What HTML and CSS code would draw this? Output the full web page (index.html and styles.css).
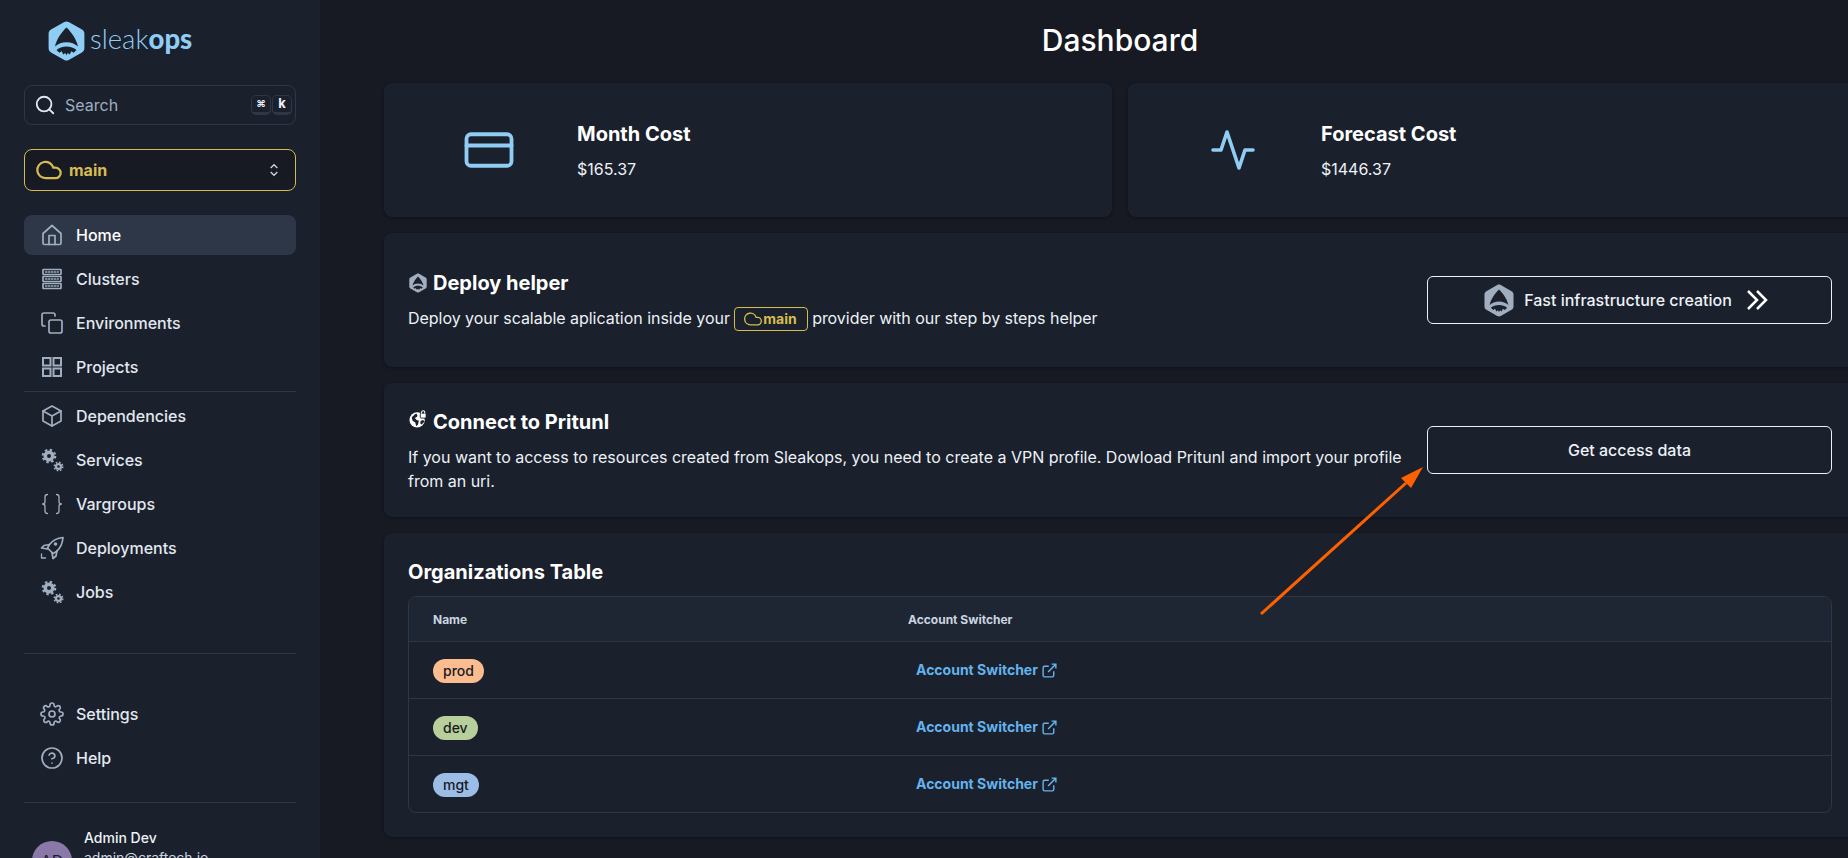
FILE: index.html
```html
<!DOCTYPE html>
<html lang="en">
<head>
    <meta charset="UTF-8">
    <title>Sleakops Dashboard</title>
    <link rel="stylesheet" href="styles.css">
</head>
<body>
    <svg class="defs" width="0" height="0">
        <symbol id="logo" viewBox="0 0 37 40">
            <path fill="currentColor" d="M16.3 1 3 8.6C1.5 9.4.6 11 .6 12.700v14.600c0 1.700.9 3.300 2.400 4.100L16.300 39c1.400.8 3 .8 4.400 0L34 31.400c1.500-.8 2.400-2.400 2.400-4.100V12.700c0-1.700-.9-3.300-2.400-4.100L20.700 1c-1.400-.8-3-.8-4.400 0Z"/>
            <path fill="#1a202c" d="M18.500 6.500C13.500 11 8.500 18.500 7 25.500c3-2.800 7-4.300 11.500-4.300s8.500 1.500 11.500 4.300C28.500 18.500 23.500 11 18.500 6.500Z"/>
            <path fill="#1a202c" d="M8.500 29c2.600-2.200 6-3.400 10-3.400s7.400 1.200 10 3.400l-2.800 2.700-2.400-1.500-1.500 3.300-2-1.600-1.300 2.300-1.300-2.300-2 1.600-1.500-3.300-2.400 1.500Z"/>
        </symbol>
    </svg>

    <div class="app">
        <aside class="sidebar">
            <div class="brand">
                <svg class="brand-icon"><use href="#logo"/></svg>
                <span class="brand-name">sleak<b>ops</b></span>
            </div>

            <div class="search">
                <svg class="search-icon" viewBox="0 0 24 24"><circle cx="11" cy="11" r="8"/><path d="m21 21-4.300-4.300"/></svg>
                <span class="search-text">Search</span>
                <kbd class="key cmd">⌘</kbd>
                <kbd class="key">k</kbd>
            </div>

            <div class="provider">
                <svg class="cloud-icon" viewBox="0 0 24 24"><path d="M17.500 19H9a7 7 0 1 1 6.700-9h1.800a4.500 4.500 0 1 1 0 9Z"/></svg>
                <span class="provider-name">main</span>
                <svg class="updown-icon" viewBox="0 0 24 24"><path d="m7 9 5-5 5 5M7 15l5 5 5-5"/></svg>
            </div>

            <nav class="nav">
                <a class="nav-item active">
                    <svg class="nav-icon" viewBox="0 0 24 24"><path d="M3 10.500 12 2.500l9 8V20a1.500 1.500 0 0 1-1.500 1.500h-15A1.500 1.500 0 0 1 3 20Z"/><path d="M9 21.500V12.500h6v9"/></svg>
                    Home
                </a>
                <a class="nav-item">
                    <svg class="nav-icon" viewBox="0 0 24 24"><rect x="3" y="2.500" width="18" height="5" rx=".5"/><rect x="3" y="9.500" width="18" height="5" rx=".5"/><rect x="3" y="16.500" width="18" height="5" rx=".5"/><path class="thin" d="M5.500 5h13M5.500 12h13M5.500 19h13" stroke-dasharray="1.500 1.500"/></svg>
                    Clusters
                </a>
                <a class="nav-item">
                    <svg class="nav-icon" viewBox="0 0 24 24"><rect x="9" y="9" width="13" height="13" rx="2"/><path d="M5 15H4a2 2 0 0 1-2-2V4a2 2 0 0 1 2-2h9a2 2 0 0 1 2 2v1"/></svg>
                    Environments
                </a>
                <a class="nav-item">
                    <svg class="nav-icon square" viewBox="0 0 24 24"><rect x="3" y="3" width="7.500" height="7.500"/><rect x="13.500" y="3" width="7.500" height="7.500"/><rect x="3" y="13.500" width="7.500" height="7.500"/><rect x="13.500" y="13.500" width="7.500" height="7.500"/></svg>
                    Projects
                </a>
                <div class="divider"></div>
                <a class="nav-item">
                    <svg class="nav-icon" viewBox="0 0 24 24"><path d="M12 2 3 7v10l9 5 9-5V7Z"/><path d="m3 7 9 5 9-5M12 12v10"/></svg>
                    Dependencies
                </a>
                <a class="nav-item">
                    <svg class="nav-icon gears" viewBox="0 0 24 24"><circle class="gear-tooth" cx="9" cy="8" r="6.200"/><circle class="gear-body" cx="9" cy="8" r="5.500"/><circle class="gear-hole" cx="9" cy="8" r="2"/><circle class="gear-tooth small" cx="18.500" cy="18.500" r="4.200"/><circle class="gear-body" cx="18.500" cy="18.500" r="3.600"/><circle class="gear-hole" cx="18.500" cy="18.500" r="1.300"/></svg>
                    Services
                </a>
                <a class="nav-item">
                    <svg class="nav-icon" viewBox="0 0 24 24"><path class="thin" d="M7.500 2.500C5.500 2.500 5 3.500 5 5v4.500C5 11 4 12 2.500 12 4 12 5 13 5 14.500V19c0 1.500.5 2.500 2.500 2.500M16.500 2.500c2 0 2.500 1 2.500 2.500v4.500c0 1.500 1 2.500 2.500 2.500-1.500 0-2.500 1-2.500 2.500V19c0 1.500-.5 2.500-2.500 2.500"/></svg>
                    Vargroups
                </a>
                <a class="nav-item">
                    <svg class="nav-icon" viewBox="0 0 24 24"><path d="M23 1.500c-5.500.5-10 2.500-13.500 7l-2 3.500 5.500 5.500 3.500-2c3.500-3 6-8.500 6.500-14Z"/><path d="M9.500 8.500 4 9.500 1.500 12l6 1M17 14.500l-1 5.500-3 2.500-1-6"/><circle class="dot" cx="15.500" cy="8" r="1.800"/><path class="thin" d="M1.500 18v4h4"/></svg>
                    Deployments
                </a>
                <a class="nav-item">
                    <svg class="nav-icon gears" viewBox="0 0 24 24"><circle class="gear-tooth" cx="9" cy="8" r="6.200"/><circle class="gear-body" cx="9" cy="8" r="5.500"/><circle class="gear-hole" cx="9" cy="8" r="2"/><circle class="gear-tooth small" cx="18.500" cy="18.500" r="4.200"/><circle class="gear-body" cx="18.500" cy="18.500" r="3.600"/><circle class="gear-hole" cx="18.500" cy="18.500" r="1.300"/></svg>
                    Jobs
                </a>
                <div class="divider spaced"></div>
                <a class="nav-item">
                    <svg class="nav-icon" viewBox="0 0 24 24"><circle cx="12" cy="12" r="3"/><path d="M19.400 15a1.650 1.650 0 0 0 .33 1.820l.06.06a2 2 0 1 1-2.830 2.830l-.06-.06a1.650 1.650 0 0 0-2.820 1.170V21a2 2 0 1 1-4 0v-.09A1.650 1.650 0 0 0 7.260 19.740l-.06.06a2 2 0 1 1-2.830-2.830l.06-.06A1.650 1.650 0 0 0 3.260 14H3a2 2 0 1 1 0-4h.09a1.650 1.650 0 0 0 1.170-2.820l-.06-.06a2 2 0 1 1 2.830-2.830l.06.06A1.650 1.650 0 0 0 10 3.260V3a2 2 0 1 1 4 0v.09a1.650 1.650 0 0 0 2.820 1.170l.06-.06a2 2 0 1 1 2.830 2.830l-.06.06A1.650 1.650 0 0 0 20.910 10H21a2 2 0 1 1 0 4h-.09a1.650 1.650 0 0 0-1.510 1Z"/></svg>
                    Settings
                </a>
                <a class="nav-item">
                    <svg class="nav-icon" viewBox="0 0 24 24"><circle cx="12" cy="12" r="10"/><path d="M9.100 9a3 3 0 0 1 5.800 1c0 2-3 2.800-3 2.800M12 17h.01"/></svg>
                    Help
                </a>
                <div class="divider last"></div>
            </nav>

            <div class="user">
                <div class="avatar">AD</div>
                <div class="user-info">
                    <div class="user-name">Admin Dev</div>
                    <div class="user-mail">admin@craftech.io</div>
                </div>
            </div>
        </aside>

        <main class="main">
            <h1 class="page-title">Dashboard</h1>

            <div class="stats">
                <section class="card stat">
                    <svg class="stat-icon wide" viewBox="0 0 24 24"><rect x="2" y="5" width="20" height="14" rx="2"/><path d="M2 10h20"/></svg>
                    <div>
                        <h2 class="stat-title">Month Cost</h2>
                        <p class="stat-value">$165.37</p>
                    </div>
                </section>
                <section class="card stat">
                    <svg class="stat-icon" viewBox="0 0 24 24"><path d="M22 12h-4l-3 9L9 3l-3 9H2"/></svg>
                    <div>
                        <h2 class="stat-title">Forecast Cost</h2>
                        <p class="stat-value">$1446.37</p>
                    </div>
                </section>
            </div>

            <section class="card helper">
                <div class="helper-text deploy">
                    <h2 class="card-title"><svg class="title-icon"><use href="#logo"/></svg>Deploy helper</h2>
                    <p>Deploy your scalable aplication inside your <span class="chip"><svg class="chip-icon" viewBox="0 0 24 24"><path d="M17.500 19H9a7 7 0 1 1 6.700-9h1.800a4.500 4.500 0 1 1 0 9Z"/></svg>main</span> provider with our step by steps helper</p>
                </div>
                <button class="outline-btn with-icons">
                    <svg class="btn-logo"><use href="#logo"/></svg>
                    Fast infrastructure creation
                    <svg class="btn-arrows" viewBox="0 0 24 24"><path d="m4 3 9 9-9 9M13 3l9 9-9 9"/></svg>
                </button>
            </section>

            <section class="card helper">
                <div class="helper-text">
                    <h2 class="card-title">
                        <svg class="title-icon globe" viewBox="0 0 20 20"><circle cx="9" cy="11" r="8.500"/><path class="land" d="M3 8c2-1 3-3 5-4 1 1 2 2 1 3.500L6.500 9l2 2 2.500 1-1 4-2 2-1-4-3-2ZM13 12l3-1 1 2-3 3-1.500-1Z"/><rect class="lock" x="12.500" y="3.500" width="6.500" height="5.500" rx="1"/><path class="shackle" d="M14 4V2.500a1.700 1.700 0 0 1 3.500 0V4"/></svg>Connect to Pritunl</h2>
                    <p>If you want to access to resources created from Sleakops, you need to create a VPN profile. Dowload Pritunl and import your profile from an uri.</p>
                </div>
                <button class="outline-btn">Get access data</button>
            </section>

            <section class="card orgs">
                <h2 class="card-title">Organizations Table</h2>
                <div class="table-wrap">
                    <table class="org-table">
                        <thead>
                            <tr>
                                <th class="name-col">Name</th>
                                <th>Account Switcher</th>
                            </tr>
                        </thead>
                        <tbody>
                            <tr>
                                <td><span class="badge prod">prod</span></td>
                                <td><a class="switch-link">Account Switcher<svg class="ext-icon" viewBox="0 0 24 24"><path d="M18 13v6a2 2 0 0 1-2 2H5a2 2 0 0 1-2-2V8a2 2 0 0 1 2-2h6M15 3h6v6M10 14 21 3"/></svg></a></td>
                            </tr>
                            <tr>
                                <td><span class="badge dev">dev</span></td>
                                <td><a class="switch-link">Account Switcher<svg class="ext-icon" viewBox="0 0 24 24"><path d="M18 13v6a2 2 0 0 1-2 2H5a2 2 0 0 1-2-2V8a2 2 0 0 1 2-2h6M15 3h6v6M10 14 21 3"/></svg></a></td>
                            </tr>
                            <tr>
                                <td><span class="badge mgt">mgt</span></td>
                                <td><a class="switch-link">Account Switcher<svg class="ext-icon" viewBox="0 0 24 24"><path d="M18 13v6a2 2 0 0 1-2 2H5a2 2 0 0 1-2-2V8a2 2 0 0 1 2-2h6M15 3h6v6M10 14 21 3"/></svg></a></td>
                            </tr>
                        </tbody>
                    </table>
                </div>
            </section>
        </main>
    </div>

    <!-- annotation drawn over the page -->
    <svg class="annotation" viewBox="0 0 1848 858">
        <path d="M1261 614 1406 483" stroke="#ff6000" stroke-width="3" fill="none"/>
        <path d="M1423 467 1411 488 1401 478Z" fill="#ff6000"/>
    </svg>
</body>
</html>
```

FILE: styles.css
```css
html, body {
    margin: 0;
    height: 100%;
    overflow: hidden;
}
body {
    font-family: "Inter", "Liberation Sans", sans-serif;
    font-size: 16px;
    line-height: 24px;
    background-color: #171923;
    color: #edf2f7;
    position: relative;
}
.defs { position: absolute; }
.app {
    display: flex;
    width: 1920px;
    height: 100%;
}

/* sidebar */
.sidebar {
    width: 320px;
    flex: none;
    box-sizing: border-box;
    padding: 21px 24px 0;
    background-color: #1a202c;
    overflow: hidden;
}
.brand {
    display: flex;
    align-items: center;
    height: 40px;
    margin-bottom: 24px;
    padding-left: 24px;
    color: #90cdf4;
}
.brand-icon {
    width: 37px;
    height: 40px;
    margin-right: 5px;
}
.brand-name {
    margin-top: -4px;
    font-family: "Lato", "Inter", sans-serif;
    font-size: 27.500px;
    font-weight: 300;
}
.brand-name b { font-weight: 900; }

.search {
    display: flex;
    align-items: center;
    height: 40px;
    box-sizing: border-box;
    padding: 0 3px 0 9px;
    margin-bottom: 24px;
    border: 1px solid #2d3748;
    border-radius: 8px;
}
.search-icon {
    width: 22px;
    height: 22px;
    fill: none;
    stroke: #e2e8f0;
    stroke-width: 2;
    stroke-linecap: round;
}
.search-text {
    flex: 1;
    margin-left: 9px;
    color: #a0aec0;
}
.key {
    width: 20px;
    height: 20px;
    box-sizing: border-box;
    margin-left: 1px;
    margin-top: -1px;
    border: 1px solid #2d3748;
    border-bottom-width: 3px;
    border-radius: 5px;
    background-color: #1a202c;
    color: #edf2f7;
    font-family: "Inter", "DejaVu Sans", sans-serif;
    font-size: 13px;
    font-weight: 700;
    line-height: 15px;
    text-align: center;
}
.key.cmd { font-size: 10px; }

.provider {
    display: flex;
    align-items: center;
    height: 42px;
    box-sizing: border-box;
    padding: 0 12px 0 10px;
    margin-bottom: 24px;
    border: 1px solid #d6bc4f;
    border-radius: 8px;
    background-color: #171923;
    color: #d6bc4f;
}
.cloud-icon {
    width: 28px;
    height: 28px;
    fill: none;
    stroke: currentColor;
    stroke-width: 1.900;
}
.provider-name {
    flex: 1;
    margin-left: 6px;
    font-weight: 700;
}
.updown-icon {
    width: 16px;
    height: 16px;
    margin-right: 1px;
    fill: none;
    stroke: #cbd5e0;
    stroke-width: 2;
}

.nav-item {
    display: flex;
    align-items: center;
    height: 40px;
    margin-bottom: 4px;
    padding-left: 16px;
    border-radius: 8px;
    color: #e2e8f0;
    font-weight: 450;
}
.nav-item.active {
    background-color: #2d3748;
    color: #fff;
}
.nav-icon {
    width: 24px;
    height: 24px;
    margin-right: 12px;
    flex: none;
    fill: none;
    stroke: #a0aec0;
    stroke-width: 1.700;
    stroke-linejoin: round;
    stroke-linecap: round;
}
.nav-icon.square { stroke-linejoin: miter; stroke-width: 2; }
.nav-icon .thin { stroke-width: 1.300; }
.nav-icon .dot { fill: #a0aec0; stroke: none; }
.gears .gear-body { fill: #a0aec0; stroke: none; }
.gears .gear-hole { fill: #1a202c; stroke: none; }
.gears .gear-tooth {
    stroke: #a0aec0;
    stroke-width: 2.200;
    stroke-linecap: butt;
    stroke-dasharray: 2.400 2.470;
}
.gears .gear-tooth.small {
    stroke-width: 1.600;
    stroke-dasharray: 1.650 1.650;
}
.divider {
    height: 1px;
    margin-bottom: 4px;
    background-color: #2d3748;
}
.divider.spaced { margin: 41px 0 40px; }
.divider.last { margin: 24px 0 0; }

.user {
    position: relative;
    height: 60px;
    padding-left: 60px;
    margin-top: 25px;
    font-size: 14px;
    line-height: 20px;
}
.avatar {
    position: absolute;
    left: 8px;
    top: 13px;
    width: 40px;
    height: 40px;
    border-radius: 50%;
    background-color: #8a78a8;
    color: #1a202c;
    font-size: 16px;
    line-height: 40px;
    text-align: center;
}
.user-name { color: #edf2f7; font-weight: 450; }
.user-mail { color: #cbd5e0; }

/* main */
.main {
    width: 1600px;
    box-sizing: border-box;
    padding: 16px 64px 0;
}
.page-title {
    margin: 0 0 19px;
    font-size: 30px;
    font-weight: 500;
    line-height: 48px;
    text-align: center;
    color: #fff;
}
.stats {
    display: grid;
    grid-template-columns: 1fr 1fr;
    gap: 16px;
    margin-bottom: 16px;
}
.card {
    box-sizing: border-box;
    padding: 24px;
    margin-bottom: 16px;
    background-color: #1a202c;
    border-radius: 8px;
    box-shadow: 0 1px 3px rgba(0,0,0,0.3);
}
.stat {
    display: flex;
    align-items: center;
    height: 134px;
    margin-bottom: 0;
    padding-left: 81px;
}
.stat-icon {
    width: 48px;
    height: 48px;
    margin-right: 64px;
    fill: none;
    stroke: #90cdf4;
    stroke-width: 1.800;
    stroke-linecap: round;
    stroke-linejoin: round;
}
.stat-icon.wide {
    width: 54px;
    height: 54px;
    margin: 0 61px 0 -3px;
    stroke-width: 1.700;
}
.stat-title {
    margin: 0 0 8px;
    font-size: 20px;
    font-weight: 700;
    line-height: 30px;
    color: #fff;
}
.stat-value { margin: 0; }

.helper {
    display: flex;
    align-items: center;
    min-height: 134px;
}
.helper-text {
    flex: 1;
    padding-right: 24px;
}
.helper-text p { margin: 0; letter-spacing: -0.01px; }
.helper-text.deploy { margin-bottom: 2px; }
.helper-text.deploy p { letter-spacing: -0.03px; }
.card-title {
    display: flex;
    align-items: center;
    margin: 0 0 8px;
    font-size: 20px;
    font-weight: 700;
    line-height: 30px;
    color: #fff;
}
.title-icon {
    width: 18px;
    height: 20px;
    margin: 0 6px 0 1px;
    color: #a0aec0;
}
.title-icon.globe {
    margin-top: -6px;
}
.globe circle { fill: #fff; }
.globe .land { fill: #1a202c; }
.globe .lock { fill: #fff; stroke: #1a202c; stroke-width: 1; }
.globe .shackle { fill: none; stroke: #fff; stroke-width: 1.200; }

.chip {
    display: inline-flex;
    align-items: center;
    height: 24px;
    box-sizing: border-box;
    padding: 0 10px 0 8px;
    margin: -4px 0;
    vertical-align: -5px;
    border: 1px solid #d6bc4f;
    border-radius: 4px;
    color: #d6bc4f;
    font-size: 14px;
    font-weight: 700;
}
.chip-icon {
    width: 20px;
    height: 20px;
    fill: none;
    stroke: currentColor;
    stroke-width: 1.600;
}
.outline-btn {
    display: flex;
    align-items: center;
    justify-content: center;
    flex: none;
    width: 405px;
    height: 48px;
    border: 1px solid #edf2f7;
    border-radius: 6px;
    background: transparent;
    color: #edf2f7;
    font-family: inherit;
    font-size: 16px;
    font-weight: 450;
}
.outline-btn.with-icons { padding: 0 7px 0 0; }
.btn-logo {
    width: 30px;
    height: 33px;
    margin-right: 10px;
    color: #a0aec0;
}
.btn-arrows {
    width: 24px;
    height: 24px;
    margin-left: 12px;
    fill: none;
    stroke: #fff;
    stroke-width: 2.500;
}

.orgs {
    padding-bottom: 24px;
    margin-bottom: 0;
}
.table-wrap {
    margin-top: 9px;
    border: 1px solid #2d3748;
    border-radius: 8px;
    overflow: hidden;
}
.org-table {
    width: 100%;
    border-collapse: collapse;
}
.org-table th {
    height: 44px;
    padding: 2px 24px 0;
    box-sizing: border-box;
    border-bottom: 1px solid #2d3748;
    background-color: #1f2633;
    color: #cbd5e0;
    font-size: 12px;
    font-weight: 700;
    text-align: left;
}
.org-table .name-col { width: 475px; }
.org-table td {
    height: 56px;
    padding: 0 24px;
    border-bottom: 1px solid #2d3748;
}
.org-table tr:last-child td { border-bottom: none; }
.badge {
    display: inline-block;
    margin-top: 2px;
    padding: 0 10px;
    border-radius: 12px;
    color: #171923;
    font-size: 14px;
    font-weight: 500;
    line-height: 24px;
    vertical-align: middle;
}
.badge.prod { background-color: #fbbd8f; }
.badge.dev { background-color: #b9cf9b; }
.badge.mgt { background-color: #9cbde6; }
.switch-link {
    display: inline-flex;
    align-items: center;
    margin: -5px 0 0 8px;
    color: #63b3ed;
    font-size: 14px;
    font-weight: 700;
}
.ext-icon {
    width: 17px;
    height: 17px;
    margin-left: 3px;
    fill: none;
    stroke: currentColor;
    stroke-width: 2;
}

.annotation {
    position: absolute;
    left: 0;
    top: 0;
    width: 1848px;
    height: 858px;
    pointer-events: none;
}
```
